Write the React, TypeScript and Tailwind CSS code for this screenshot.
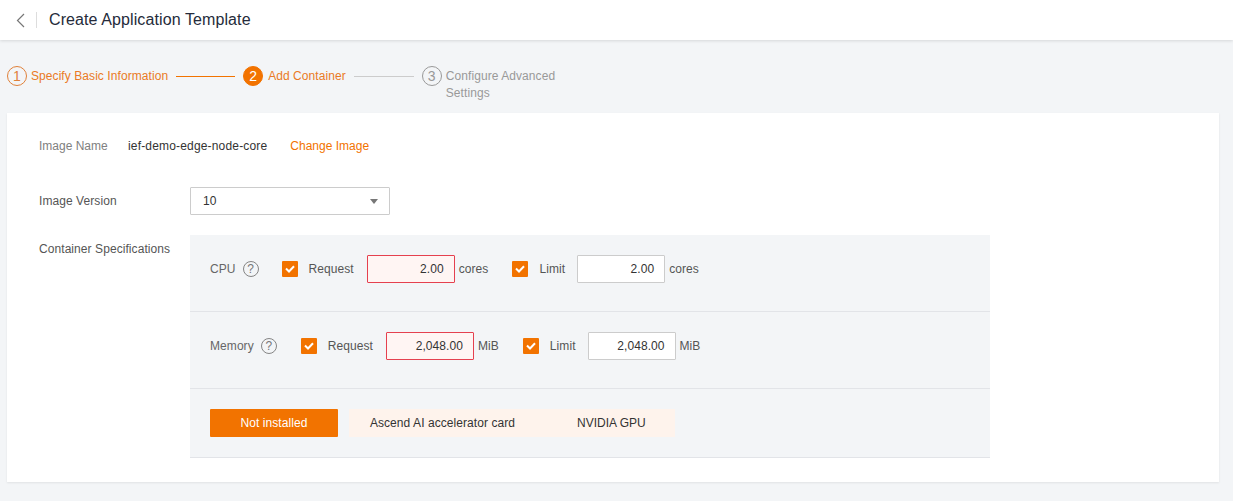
const orange = "#f27300";

function Check() {
  return (
    <span className="flex h-4 w-4 shrink-0 items-center justify-center rounded-[1px] bg-[#f27300]">
      <svg width="10" height="8" viewBox="0 0 10 8" fill="none">
        <path d="M1 3.5 L4 6.5 L9 1.2" stroke="#fff" strokeWidth="2" />
      </svg>
    </span>
  );
}

function Help() {
  return (
    <span className="flex h-4 w-4 items-center justify-center rounded-full border-[1.5px] border-[#858585] text-[12px] leading-none text-[#777]">
      ?
    </span>
  );
}

function NumberInput({ value, error }: { value: string; error?: boolean }) {
  return (
    <div
      className={`flex h-7 w-[88px] items-center justify-end rounded-[1px] border pr-2.5 text-[#333] ${
        error ? "border-[#e5404f] bg-[#fff5f3]" : "border-[#ccc] bg-white"
      }`}
    >
      {value}
    </div>
  );
}

function Step({ n, label, state }: { n: number; label: string; state: "done" | "active" | "todo" }) {
  const circle =
    state === "active"
      ? "bg-[#f27300] border-[#f27300] text-white"
      : state === "done"
        ? "border-[#e0813a] text-[#e0813a]"
        : "border-[#999] text-[#999]";
  const text =
    state === "todo"
      ? "w-[120px] text-[#999]"
      : state === "active"
        ? "ml-px whitespace-nowrap text-[#ea7a25]"
        : "whitespace-nowrap text-[#ea7a25]";
  return (
    <div className="flex items-start gap-1">
      <span className={`flex h-5 w-5 shrink-0 items-center justify-center rounded-full border text-[14px] ${circle}`}>{n}</span>
      <span className={`pt-[2px] leading-[17px] ${text}`}>{label}</span>
    </div>
  );
}

export default function App() {
  return (
    <div className="h-[501px] overflow-hidden bg-[#f3f5f7] font-['Liberation_Sans',sans-serif] text-[12px] tracking-[0.07px] text-[#333]">
      <header className="flex h-10 items-center bg-white pl-4 shadow-[0_1px_3px_rgba(0,0,0,0.12)]">
        <svg width="9" height="15" viewBox="0 0 9 15" fill="none">
          <path d="M8 1 L1.5 7.5 L8 14" stroke="#777" strokeWidth="1.2" />
        </svg>
        <span className="ml-[11px] h-4 w-px bg-[#ddd]" />
        <h1 className="ml-3 text-[16px] tracking-[0.1px] text-[#252b3a]">Create Application Template</h1>
      </header>

      <div className="flex h-[73px] items-start pl-[7px] pt-[26px]">
        <Step n={1} label="Specify Basic Information" state="done" />
        <span className="mx-2 mt-[10px] h-px w-[59px] bg-[#f27300]" />
        <Step n={2} label="Add Container" state="active" />
        <span className="mx-2 mt-[10px] h-px w-[60px] bg-[#ccc]" />
        <Step n={3} label="Configure Advanced Settings" state="todo" />
      </div>

      <main className="mx-[7px] h-[369px] w-[1212px] bg-white pl-8 pt-[25px] shadow-[0_1px_2px_rgba(0,0,0,0.08)]">
        <div className="flex h-4 items-center">
          <span className="w-[89px] tracking-normal text-[#808080]">Image Name</span>
          <span className="tracking-[0.17px]">ief-demo-edge-node-core</span>
          <span className="ml-[23px] tracking-normal" style={{ color: orange }}>
            Change Image
          </span>
        </div>

        <div className="mt-[33px] flex items-center">
          <span className="w-[151px] text-[#555]">Image Version</span>
          <div className="flex h-7 w-[200px] items-center justify-between rounded-[1px] border border-[#ccc] pl-3 pr-[11px]">
            <span>10</span>
            <span className="h-0 w-0 border-x-[4px] border-t-[5px] border-x-transparent border-t-[#777]" />
          </div>
        </div>

        <div className="mt-5 flex items-start">
          <span className="w-[151px] pt-[5px] text-[#555]">Container Specifications</span>
          <div className="w-[800px] bg-[#f3f5f7]">
            <div className="flex h-[77px] items-center border-b border-[#e2e4e8] pb-2 pl-5">
              <span className="text-[#666]">CPU</span>
              <span className="ml-[7px]"><Help /></span>
              <span className="ml-[23px]"><Check /></span>
              <span className="ml-[11px] text-[#555]">Request</span>
              <span className="ml-[13px]"><NumberInput value="2.00" error /></span>
              <span className="ml-1 text-[#555]">cores</span>
              <span className="ml-6"><Check /></span>
              <span className="ml-[11px] text-[#555]">Limit</span>
              <span className="ml-3"><NumberInput value="2.00" /></span>
              <span className="ml-1 text-[#555]">cores</span>
            </div>
            <div className="flex h-[77px] items-center border-b border-[#e2e4e8] pb-[9px] pl-5">
              <span className="text-[#666]">Memory</span>
              <span className="ml-[7px]"><Help /></span>
              <span className="ml-6"><Check /></span>
              <span className="ml-[11px] text-[#555]">Request</span>
              <span className="ml-[13px]"><NumberInput value="2,048.00" error /></span>
              <span className="ml-1 text-[#555]">MiB</span>
              <span className="ml-6"><Check /></span>
              <span className="ml-[11px] text-[#555]">Limit</span>
              <span className="ml-3"><NumberInput value="2,048.00" /></span>
              <span className="ml-1 text-[#555]">MiB</span>
            </div>
            <div className="flex h-[69px] items-start border-b border-[#e2e4e8] pl-5 pt-5">
              <div className="flex h-7 w-[128px] items-center justify-center rounded-[1px] bg-[#f27300] text-white">Not installed</div>
              <div className="ml-[11px] flex h-7 w-[187px] items-center justify-center bg-[#fef3ec]">Ascend AI accelerator card</div>
              <div className="flex h-7 w-[139px] items-center bg-[#fef3ec] pl-[41px] tracking-normal">NVIDIA GPU</div>
            </div>
          </div>
        </div>
      </main>
    </div>
  );
}
